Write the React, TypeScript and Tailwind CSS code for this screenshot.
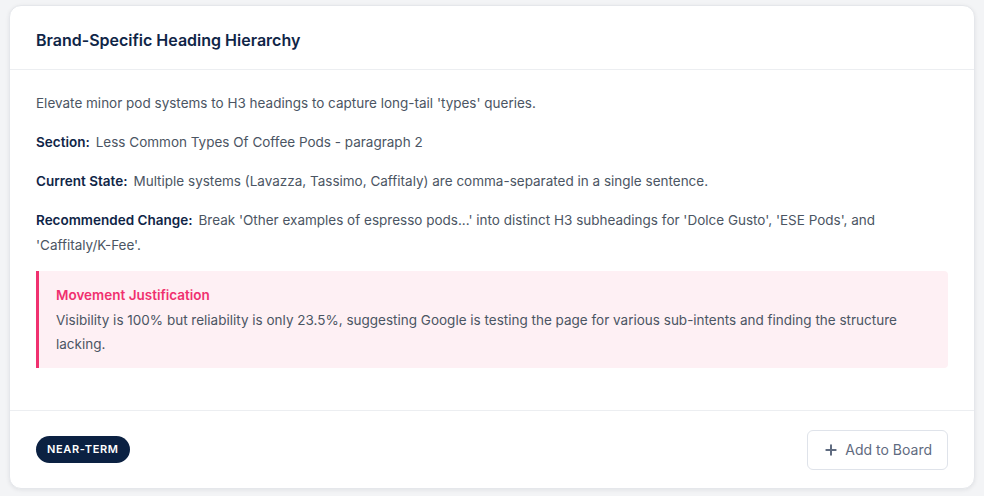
import { Plus } from "lucide-react";

export default function App() {
  return (
    <div
      className="min-h-screen bg-[#f3f4f6] px-[9px] pt-[5px]"
      style={{ fontFamily: "Inter, 'Noto Sans', sans-serif" }}
    >
      <div className="rounded-[12px] border border-[#e5e7eb] bg-white shadow-[0_1px_4px_rgba(15,23,42,0.08)]">
        {/* Header */}
        <div className="flex h-[64px] items-center border-b border-[#eceef1] px-[26px] pt-[4px]">
          <h2 className="text-[16px] font-semibold text-[#0f2547]">
            Brand-Specific Heading Hierarchy
          </h2>
        </div>

        {/* Body */}
        <div className="px-[26px] pb-[42px] pt-[21px] text-[13.5px] leading-[25px] text-[#4b5563]">
          <p>Elevate minor pod systems to H3 headings to capture long-tail 'types' queries.</p>
          <p className="mt-[14px]">
            <span className="mr-[6px] font-semibold text-[#0f2547]">Section:</span>
            Less Common Types Of Coffee Pods - paragraph 2
          </p>
          <p className="mt-[14px]">
            <span className="mr-[6px] font-semibold text-[#0f2547]">Current State:</span>
            Multiple systems (Lavazza, Tassimo, Caffitaly) are comma-separated in a single sentence.
          </p>
          <p className="mt-[14px]">
            <span className="mr-[6px] font-semibold text-[#0f2547]">Recommended Change:</span>
            Break 'Other examples of espresso pods...' into distinct H3 subheadings for 'Dolce Gusto',
            'ESE Pods', and 'Caffitaly/K-Fee'.
          </p>

          <div className="mt-[13px] rounded-r-[4px] border-l-[3px] border-[#f0306f] bg-[#fef0f4] py-[12px] pl-[17px] pr-4">
            <p className="font-semibold text-[#f0306f]">Movement Justification</p>
            <p className="leading-[24px]">
              Visibility is 100% but reliability is only 23.5%, suggesting Google is testing the page for
              various sub-intents and finding the structure lacking.
            </p>
          </div>
        </div>

        {/* Footer */}
        <div className="flex h-[78px] items-center justify-between border-t border-[#eceef1] px-[26px]">
          <span className="rounded-full bg-[#0b2142] px-[11px] py-[5px] text-[11px] font-semibold uppercase tracking-[0.06em] text-white">
            Near-term
          </span>
          <button className="flex h-[40px] items-center gap-[6px] rounded-[6px] border border-[#dfe3ea] bg-white px-[15px] text-[14px] text-[#5f6b80]">
            <Plus className="h-4 w-4" strokeWidth={3} />
            Add to Board
          </button>
        </div>
      </div>
    </div>
  );
}
